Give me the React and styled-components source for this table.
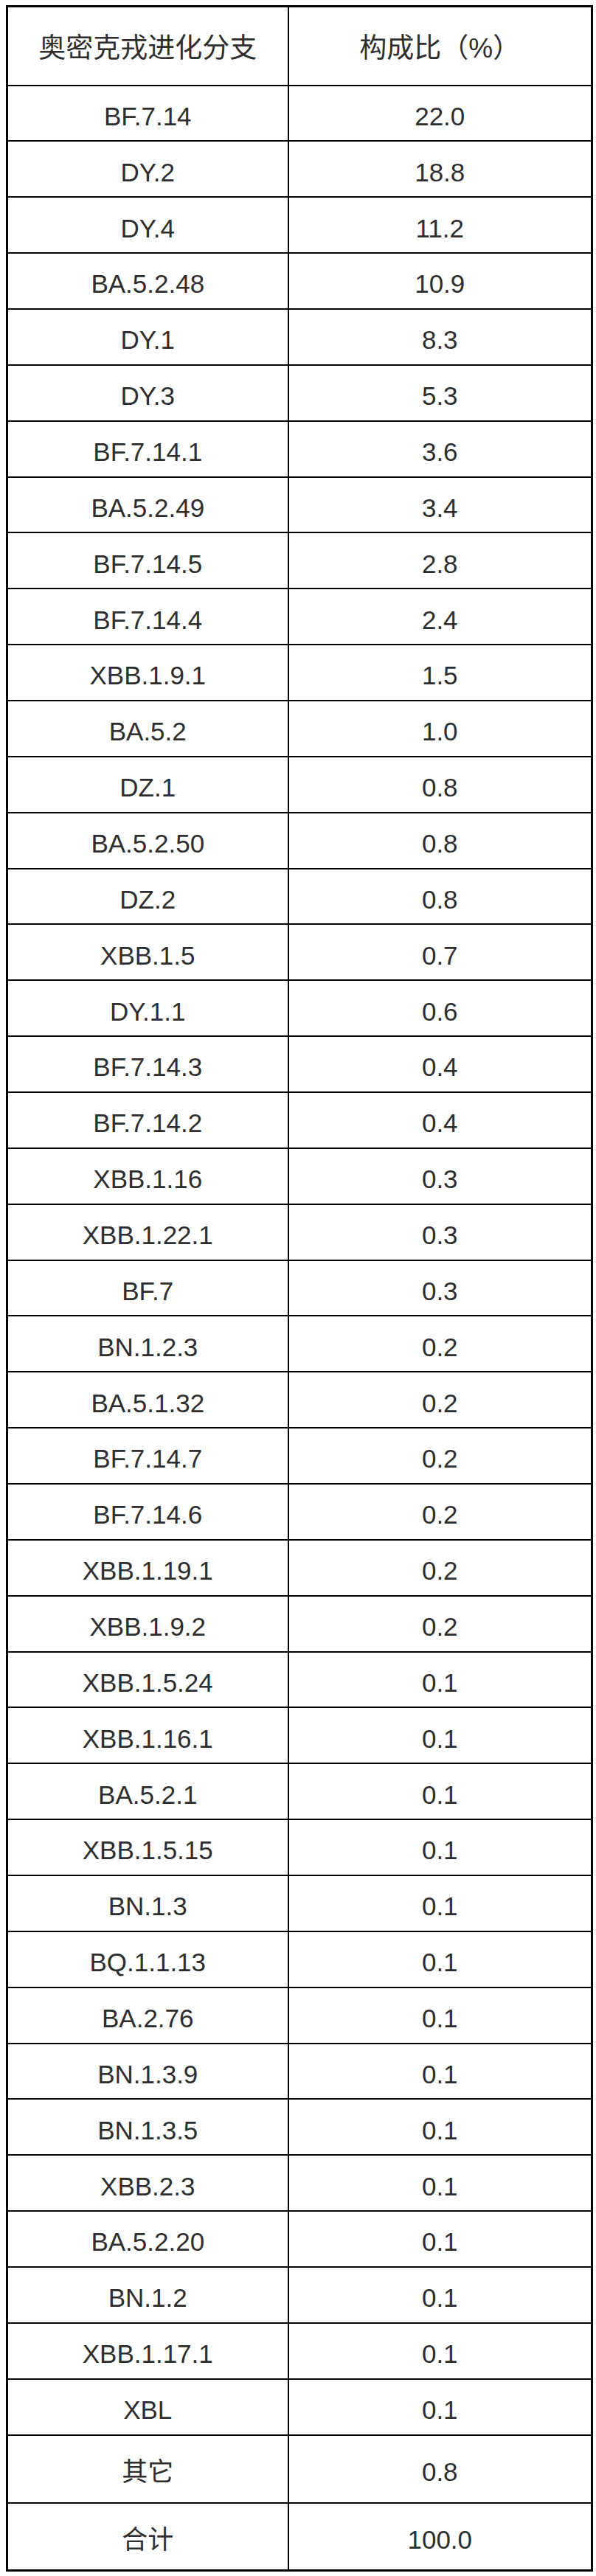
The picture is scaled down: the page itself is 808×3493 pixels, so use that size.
import styled, { createGlobalStyle } from "styled-components";

const rows = [
  ["BF.7.14", "22.0"],
  ["DY.2", "18.8"],
  ["DY.4", "11.2"],
  ["BA.5.2.48", "10.9"],
  ["DY.1", "8.3"],
  ["DY.3", "5.3"],
  ["BF.7.14.1", "3.6"],
  ["BA.5.2.49", "3.4"],
  ["BF.7.14.5", "2.8"],
  ["BF.7.14.4", "2.4"],
  ["XBB.1.9.1", "1.5"],
  ["BA.5.2", "1.0"],
  ["DZ.1", "0.8"],
  ["BA.5.2.50", "0.8"],
  ["DZ.2", "0.8"],
  ["XBB.1.5", "0.7"],
  ["DY.1.1", "0.6"],
  ["BF.7.14.3", "0.4"],
  ["BF.7.14.2", "0.4"],
  ["XBB.1.16", "0.3"],
  ["XBB.1.22.1", "0.3"],
  ["BF.7", "0.3"],
  ["BN.1.2.3", "0.2"],
  ["BA.5.1.32", "0.2"],
  ["BF.7.14.7", "0.2"],
  ["BF.7.14.6", "0.2"],
  ["XBB.1.19.1", "0.2"],
  ["XBB.1.9.2", "0.2"],
  ["XBB.1.5.24", "0.1"],
  ["XBB.1.16.1", "0.1"],
  ["BA.5.2.1", "0.1"],
  ["XBB.1.5.15", "0.1"],
  ["BN.1.3", "0.1"],
  ["BQ.1.1.13", "0.1"],
  ["BA.2.76", "0.1"],
  ["BN.1.3.9", "0.1"],
  ["BN.1.3.5", "0.1"],
  ["XBB.2.3", "0.1"],
  ["BA.5.2.20", "0.1"],
  ["BN.1.2", "0.1"],
  ["XBB.1.17.1", "0.1"],
  ["XBL", "0.1"],
];

const totals = [
  ["其它", "0.8"],
  ["合计", "100.0"],
];

function App() {
  return (
    <>
      <GlobalStyle />
      <Page>
        <Table>
          <colgroup>
            <col style={{ width: 381 }} />
            <col />
          </colgroup>
          <thead>
            <Row $h={107}>
              <Cell as="th" $size={37}>奥密克戎进化分支</Cell>
              <Cell as="th" $size={37}>构成比（%）</Cell>
            </Row>
          </thead>
          <tbody>
            {rows.map(([name, pct]) => (
              <Row key={name} $h={75.86}>
                <Cell>{name}</Cell>
                <Cell>{pct}</Cell>
              </Row>
            ))}
            {totals.map(([name, pct]) => (
              <Row key={name} $h={92}>
                <Cell>{name}</Cell>
                <Cell>{pct}</Cell>
              </Row>
            ))}
          </tbody>
        </Table>
      </Page>
    </>
  );
}

const GlobalStyle = createGlobalStyle`
  body {
    margin: 0;
    background: #fff;
  }
`;

const Page = styled.div`
  padding: 7px 4px 8px 8px;
  font-family: "Liberation Sans", "Noto Sans CJK SC", sans-serif;
  color: #2e2e2e;
`;

const Table = styled.table`
  width: 796px;
  border-collapse: collapse;
  table-layout: fixed;
  border: 3px solid #000;
`;

const Row = styled.tr`
  height: ${(p) => p.$h}px;
`;

const Cell = styled.td`
  border: 2px solid #000;
  padding: 9px 0 0;
  text-align: center;
  vertical-align: middle;
  font-size: ${(p) => p.$size || 35}px;
  font-weight: 400;
  line-height: 1.15;
`;

export default App;
